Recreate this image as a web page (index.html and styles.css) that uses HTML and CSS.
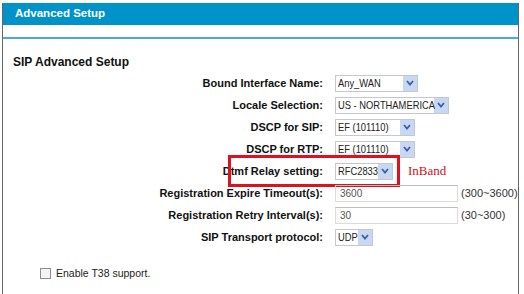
FILE: index.html
```html
<!DOCTYPE html>
<html lang="en">
<head>
    <meta charset="UTF-8">
    <title>Advanced Setup</title>
    <link rel="stylesheet" href="styles.css">
</head>
<body>
    <div class="panel">
        <div class="panel-title">Advanced Setup</div>
        <div class="panel-rule"></div>

        <h3>SIP Advanced Setup</h3>

        <div class="form">
            <div class="row">
                <label>Bound Interface Name:</label>
                <div class="select w-wan"><span>Any_WAN</span><i class="arrow"><svg width="8" height="6" viewBox="0 0 8 6"><path d="M1 1 L4 4.5 L7 1" fill="none" stroke="#3b5ea6" stroke-width="1.8"/></svg></i></div>
            </div>
            <div class="row">
                <label>Locale Selection:</label>
                <div class="select w-locale"><span>US - NORTHAMERICA</span><i class="arrow"><svg width="8" height="6" viewBox="0 0 8 6"><path d="M1 1 L4 4.5 L7 1" fill="none" stroke="#3b5ea6" stroke-width="1.8"/></svg></i></div>
            </div>
            <div class="row">
                <label>DSCP for SIP:</label>
                <div class="select w-dscp"><span>EF (101110)</span><i class="arrow"><svg width="8" height="6" viewBox="0 0 8 6"><path d="M1 1 L4 4.5 L7 1" fill="none" stroke="#3b5ea6" stroke-width="1.8"/></svg></i></div>
            </div>
            <div class="row">
                <label>DSCP for RTP:</label>
                <div class="select w-dscp"><span>EF (101110)</span><i class="arrow"><svg width="8" height="6" viewBox="0 0 8 6"><path d="M1 1 L4 4.5 L7 1" fill="none" stroke="#3b5ea6" stroke-width="1.8"/></svg></i></div>
            </div>
            <div class="row marked">
                <label>Dtmf Relay setting:</label>
                <div class="select w-dtmf"><span>RFC2833</span><i class="arrow"><svg width="8" height="6" viewBox="0 0 8 6"><path d="M1 1 L4 4.5 L7 1" fill="none" stroke="#3b5ea6" stroke-width="1.8"/></svg></i></div>
                <span class="note">InBand</span>
                <div class="highlight"></div>
            </div>
            <div class="row">
                <label>Registration Expire Timeout(s):</label>
                <div class="text-input">3600</div>
                <span class="range">(300~3600)</span>
            </div>
            <div class="row">
                <label>Registration Retry Interval(s):</label>
                <div class="text-input">30</div>
                <span class="range">(30~300)</span>
            </div>
            <div class="row">
                <label>SIP Transport protocol:</label>
                <div class="select w-udp"><span>UDP</span><i class="arrow"><svg width="8" height="6" viewBox="0 0 8 6"><path d="M1 1 L4 4.5 L7 1" fill="none" stroke="#3b5ea6" stroke-width="1.8"/></svg></i></div>
            </div>
        </div>

        <div class="check">
            <span class="box"></span>
            <span>Enable T38 support.</span>
        </div>
    </div>
</body>
</html>
```

FILE: styles.css
```css
body {
    margin: 0;
    font-family: "Liberation Sans", Arial, sans-serif;
    background: #fff;
    color: #111;
}
.panel {
    margin: 3px 0 0 2px;
    width: 515px;
    height: 300px;
    border-left: 1px solid #666;
    border-right: 1px solid #666;
}
.panel-title {
    height: 22px;
    line-height: 21px;
    padding-left: 12px;
    background: #0093c9;
    color: #fff;
    font-size: 11.5px;
    font-weight: bold;
}
.panel-rule {
    margin-top: 12px;
    height: 2px;
    background: #4aa9d9;
}
h3 {
    margin: 16px 0 0 10px;
    font-size: 12px;
    line-height: 14px;
}
.form {
    margin-top: 3px;
}
.row {
    position: relative;
    display: flex;
    align-items: center;
    height: 22px;
}
.row label {
    width: 320px;
    padding-right: 12px;
    text-align: right;
    font-size: 11px;
    font-weight: bold;
}
.select {
    display: flex;
    align-items: center;
    height: 17px;
    box-sizing: border-box;
    border: 1px solid #c4c9d0;
    padding-left: 2px;
    font-size: 11px;
    color: #222;
    white-space: nowrap;
}
.select span {
    flex: 1;
    min-width: 0;
    transform: scaleX(0.85);
    transform-origin: left center;
}
.arrow {
    display: flex;
    flex-shrink: 0;
    align-items: center;
    justify-content: center;
    width: 14px;
    height: 15px;
    background: #c9d8f2;
}
.w-wan { width: 83px; }
.w-locale { width: 114px; }
.w-dscp { width: 80px; }
.w-dtmf { width: 58px; }
.w-udp { width: 38px; }
.text-input {
    width: 123px;
    height: 17px;
    box-sizing: border-box;
    border: 1px solid #dcdcdc;
    border-top-color: #bdbdbd;
    padding-left: 4px;
    font-size: 10px;
    line-height: 15px;
    color: #555;
}
.range {
    margin-left: 3px;
    font-size: 11px;
    color: #333;
}
.note {
    margin-left: 15px;
    font-family: "Liberation Serif", "Times New Roman", serif;
    font-size: 13px;
    color: #d0101a;
}
.highlight {
    position: absolute;
    left: 225px;
    top: -5px;
    width: 166px;
    height: 26px;
    border: 3px solid #e0101e;
}
.check {
    display: flex;
    align-items: center;
    margin: 19px 0 0 37px;
    font-size: 10.5px;
    color: #222;
}
.check .box {
    width: 9px;
    height: 9px;
    margin-right: 5px;
    border: 1px solid #8a8f96;
    background: #f4f4f4;
}
```
